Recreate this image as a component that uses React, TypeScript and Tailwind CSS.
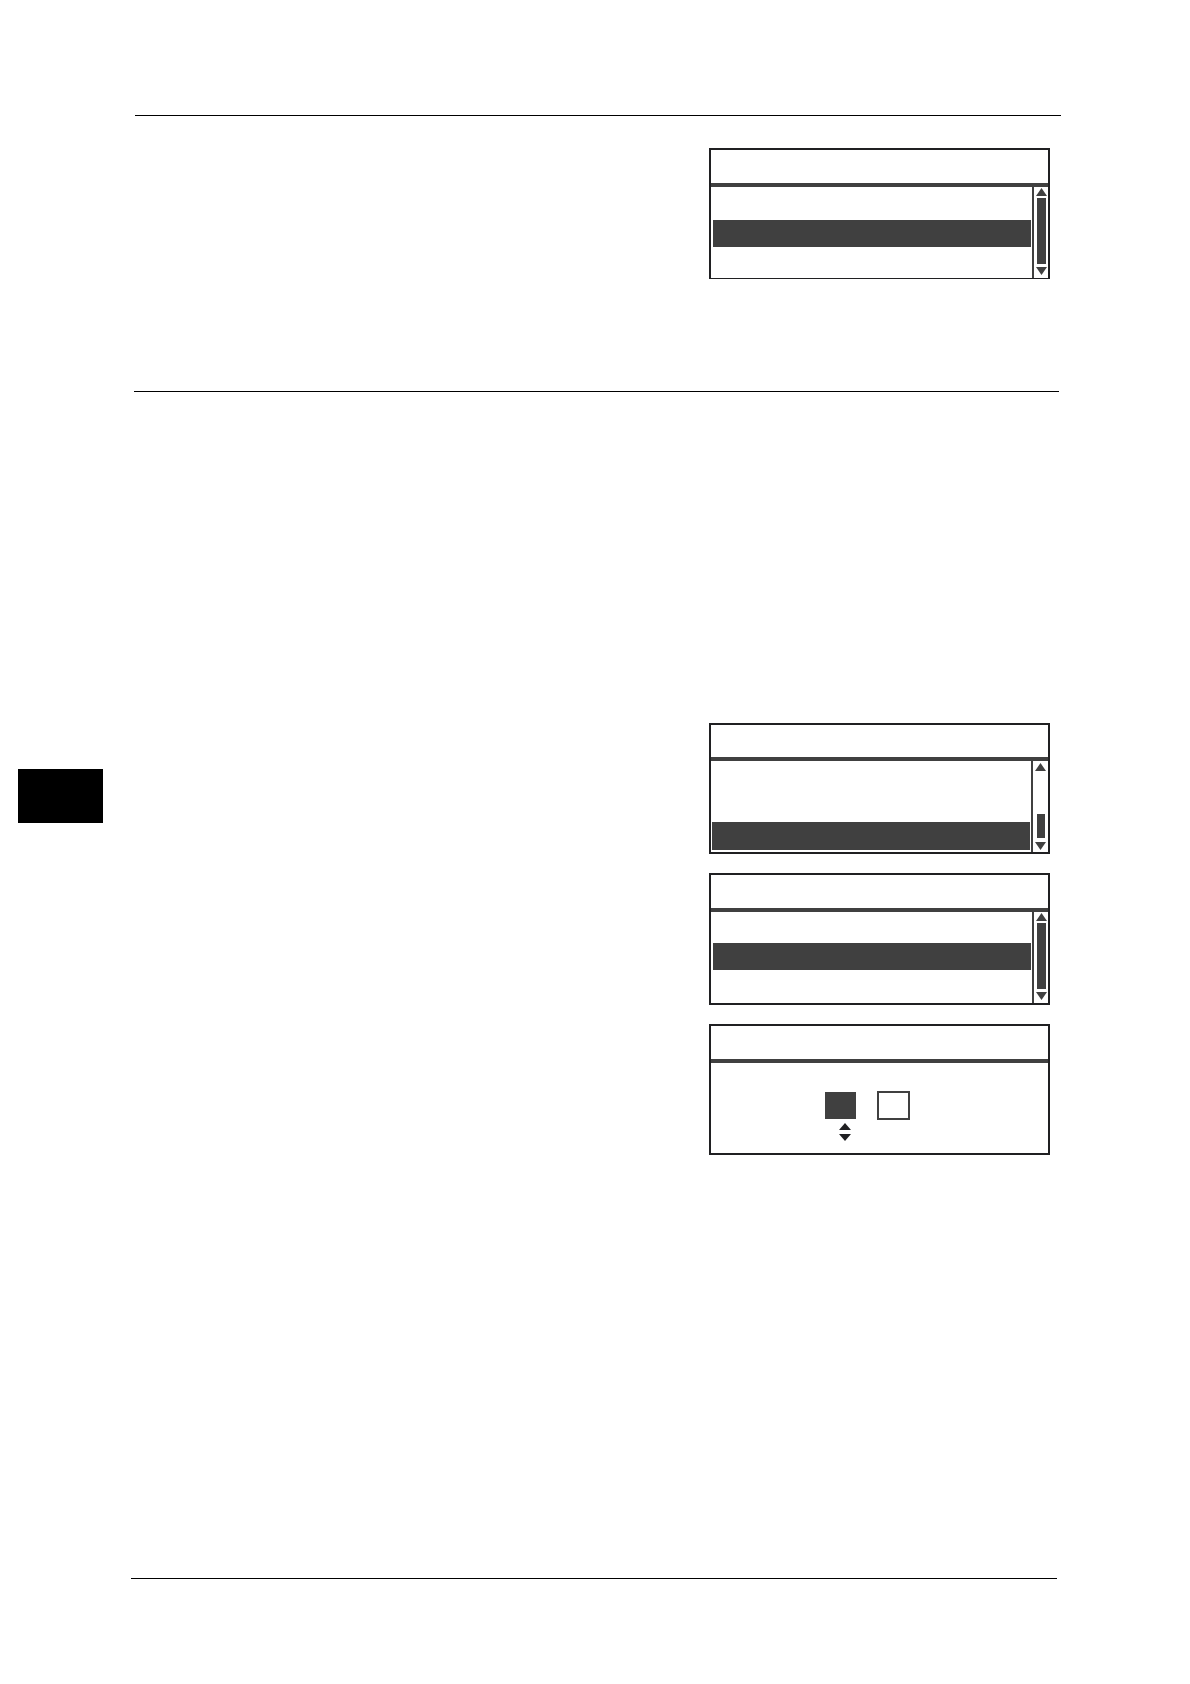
import React from "react";
import clsx from "clsx";

function Triangle({ down = false, className }: { down?: boolean; className: string }) {
  return (
    <svg viewBox="0 0 10 7" preserveAspectRatio="none" className={clsx("block shrink-0", className)} aria-hidden="true">
      <path d={down ? "M0 0H10L5 7Z" : "M5 0L10 7H0Z"} fill="currentColor" />
    </svg>
  );
}

type PanelProps = { className?: string; headerClass?: string; children: React.ReactNode };

function Panel({ className, headerClass = "h-[37px]", children }: PanelProps) {
  return (
    <section className={clsx("flex w-[341px] flex-col border-2 border-[#202022] bg-white", className)}>
      <header className={clsx("border-b-4 border-[#404040]", headerClass)} />
      {children}
    </section>
  );
}

type MenuProps = {
  listClass: string;
  rowClass: string;
  scrollClass: string;
  thumbClass: string;
};

function Menu({ listClass, rowClass, scrollClass, thumbClass }: MenuProps) {
  return (
    <div className="flex h-[91px]">
      <ul className={clsx("flex-1 pr-px", listClass)}>
        <li className={clsx("bg-[#404040]", rowClass)} />
      </ul>
      <div
        className={clsx(
          "flex flex-col items-center border-l-2 border-[#404040] text-[#404040]",
          scrollClass,
        )}
      >
        <Triangle className="h-2 w-[11px]" />
        <div className="flex w-full flex-1 flex-col items-center">
          <div className={clsx("bg-[#404040]", thumbClass)} />
        </div>
        <Triangle down className="h-2 w-[11px]" />
      </div>
    </div>
  );
}

export default function App() {
  return (
    <div className="flex min-h-screen bg-white font-['Liberation_Sans',sans-serif]">
      <aside className="w-[131px] shrink-0 pt-[769px] pl-[18px]">
        <div className="h-[54px] w-[85px] bg-black" />
      </aside>
      <main className="flex flex-1 flex-col pt-[115px] pr-[129px] pb-[105px]">
        <hr className="ml-1 border-t border-black" />
        <div className="flex justify-end pt-8 pr-[11px] pb-28">
          <Panel className="border-b">
            <Menu
              listClass="pt-[33px] pl-0.5"
              rowClass="h-[27px]"
              scrollClass="w-4 pt-px pb-[3px] pl-px"
              thumbClass="mt-0.5 h-[66px] w-[9px]"
            />
          </Panel>
        </div>
        <hr className="mr-0.5 ml-[3px] border-t border-black" />
        <div className="flex flex-1 flex-col items-end gap-[19px] pt-[331px] pr-[11px] pb-[423px]">
          <Panel headerClass="h-9">
            <Menu
              listClass="pt-[61px] pl-px"
              rowClass="h-7"
              scrollClass="w-[17px] pt-0.5 pb-0.5"
              thumbClass="mt-[43px] h-6 w-2"
            />
          </Panel>
          <Panel>
            <Menu
              listClass="pt-[31px] pl-0.5"
              rowClass="h-[27px]"
              scrollClass="w-4 pt-px pb-[3px] pl-px"
              thumbClass="mt-0.5 h-[66px] w-[9px]"
            />
          </Panel>
          <Panel>
            <div className="flex h-[90px] gap-[21px] pt-7 pl-[114px]">
              <div className="flex w-[31px] flex-col items-center pt-px">
                <input aria-label="First value" className="h-[27px] w-full bg-[#404040] text-center text-white" />
                <button type="button" aria-label="Increase" className="mt-1 ml-2 text-[#202022]">
                  <Triangle className="h-[7px] w-3" />
                </button>
                <button type="button" aria-label="Decrease" className="mt-1 ml-2 text-[#202022]">
                  <Triangle down className="h-[7px] w-3" />
                </button>
              </div>
              <input
                aria-label="Second value"
                className="h-[29px] w-[33px] border-2 border-[#404040] bg-white text-center"
              />
            </div>
          </Panel>
        </div>
        <hr className="mr-1 border-t border-black" />
      </main>
    </div>
  );
}
